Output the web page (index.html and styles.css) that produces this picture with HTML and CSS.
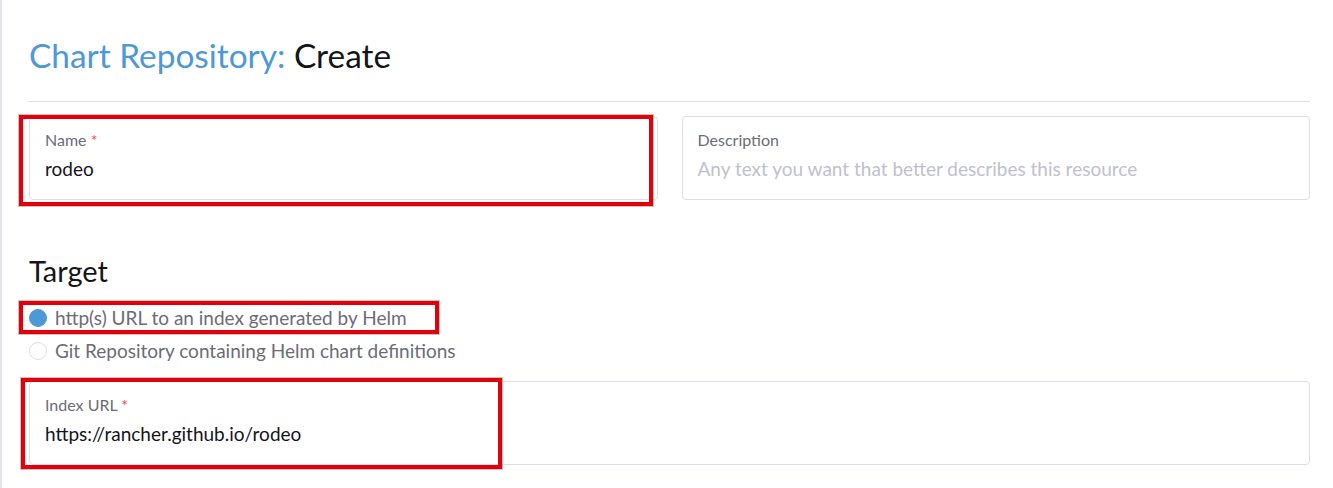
FILE: index.html
```html
<!DOCTYPE html>
<html lang="en">
<head>
<meta charset="utf-8">
<title>Chart Repository: Create</title>
<link rel="stylesheet" href="styles.css">
</head>
<body>
<div class="page">
  <header class="page-header">
    <h1 class="title"><span class="title-type">Chart Repository:</span> Create</h1>
  </header>

  <div class="name-row">
    <div class="field">
      <div class="field-label">Name <span class="req">*</span></div>
      <div class="field-value">rodeo</div>
      <div class="annot annot-name"></div>
    </div>
    <div class="field">
      <div class="field-label">Description</div>
      <div class="field-value placeholder">Any text you want that better describes this resource</div>
    </div>
  </div>

  <h2 class="section-title">Target</h2>

  <div class="radio-group">
    <div class="radio-row">
      <span class="radio checked"></span>
      <span class="radio-label">http(s) URL to an index generated by Helm</span>
      <div class="annot annot-radio"></div>
    </div>
    <div class="radio-row">
      <span class="radio"></span>
      <span class="radio-label">Git Repository containing Helm chart definitions</span>
    </div>
  </div>

  <div class="field field-url">
    <div class="field-label">Index URL <span class="req">*</span></div>
    <div class="field-value">https://rancher.github.io/rodeo</div>
    <div class="annot annot-url"></div>
  </div>
</div>
</body>
</html>
```

FILE: styles.css
```css
* { box-sizing: border-box; }
html, body {
  margin: 0;
  padding: 0;
  background: #ffffff;
  font-family: Lato, "Open Sans", "Liberation Sans", sans-serif;
}
.page {
  border-left: 2px solid #e4e4ee;
  padding: 0 23px 0 27px;
  min-height: 488px;
  overflow: hidden;
}
.page-header {
  padding-top: 35px;
  padding-bottom: 26px;
  border-bottom: 1px solid #dcdee7;
}
.title {
  margin: 0;
  font-size: 33.4px;
  font-weight: 400;
  line-height: 40px;
  color: #141419;
}
.title-type { color: #4d98d6; }

.name-row {
  display: grid;
  grid-template-columns: 1fr 1fr;
  column-gap: 24px;
  margin-top: 14px;
}
.field {
  position: relative;
  border: 1px solid #dcdee7;
  border-radius: 4px;
  padding: 13px 15px 0 15px;
  height: 84px;
}
.field-label {
  font-size: 16px;
  line-height: 20px;
  color: #6c6c76;
}
.req { color: #f64747; }
.field-value {
  margin-top: 7px;
  font-size: 19px;
  line-height: 24px;
  color: #141419;
}
.placeholder { color: #c0c0cf; }

.section-title {
  margin: 54px 0 0 0;
  font-size: 29px;
  font-weight: 400;
  line-height: 34px;
  color: #141419;
}
.radio-group {
  margin-top: 13px;
  display: flex;
  flex-direction: column;
}
.radio-row {
  position: relative;
  display: flex;
  align-items: center;
  gap: 8px;
  height: 33px;
}
.radio {
  width: 18px;
  height: 18px;
  border-radius: 50%;
  border: 1px solid #dcdee7;
  background: #fff;
  flex: none;
}
.radio.checked {
  border-color: #4d98d6;
  background: #4d98d6;
}
.radio-label {
  font-size: 19px;
  line-height: 24px;
  color: #6c6c76;
}
.field-url {
  margin-top: 14px;
}

.annot {
  position: absolute;
  border: 4px solid #e3000b;
  box-shadow: 0 0 0 1px rgba(90, 90, 90, 0.35);
  pointer-events: none;
}
.annot-name {
  left: -11px;
  top: -2px;
  width: 634px;
  height: 91px;
}
.annot-radio {
  left: -10px;
  top: 0px;
  width: 420px;
  height: 33px;
}
.annot-url {
  left: -9px;
  top: -4px;
  width: 481px;
  height: 91px;
}
```
